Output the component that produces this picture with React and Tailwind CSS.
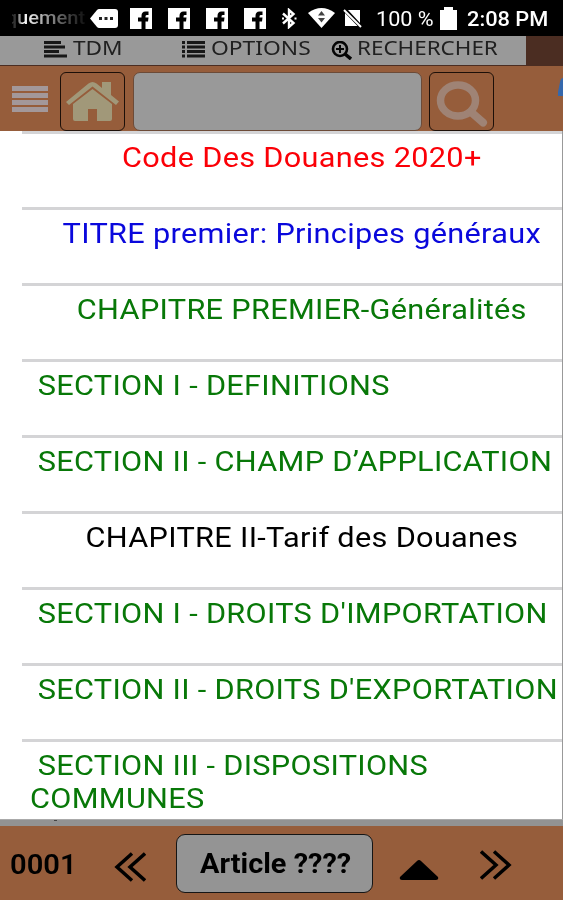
const ENTRIES = [
  { text: "Code Des Douanes 2020+", style: "text-[#fb0007] text-center" },
  { text: "TITRE premier: Principes généraux", style: "text-[#0a08dc] text-center" },
  { text: "CHAPITRE PREMIER-Généralités", style: "text-[#087808] text-center" },
  { text: "SECTION I - DEFINITIONS", style: "text-[#087808] indent-[7px]" },
  { text: "SECTION II - CHAMP D’APPLICATION", style: "text-[#087808] indent-[7px]" },
  { text: "CHAPITRE II-Tarif des Douanes", style: "text-black text-center" },
  { text: "SECTION I - DROITS D'IMPORTATION", style: "text-[#087808] indent-[7px]" },
  { text: "SECTION II - DROITS D'EXPORTATION", style: "text-[#087808] indent-[7px]" },
  { text: "SECTION III - DISPOSITIONS\nCOMMUNES", style: "text-[#087808] indent-[7px]" },
];

function FacebookIcon() {
  return (
    <svg viewBox="0 0 22 21" className="h-[21px] w-[22px] shrink-0">
      <path d="M0 0h22v21H0z" fill="#fff" />
      <path d="M11.500 21v-7.500H8V9.500H11.500V8Q11.500 3.500 15.500 3.500H18.500V7H17Q15.500 7 15.500 8.400V9.500H18.500L18 13.500H15.500V21z" fill="#000" />
    </svg>
  );
}

function StatusBar() {
  return (
    <div className="flex h-[36px] items-center bg-black text-white">
      <div className="ml-[12px] h-[26px] w-[73px] shrink-0 overflow-hidden">
        <span className="block w-max origin-left scale-x-[1.06] bg-gradient-to-r from-[#333] from-5% via-white via-15% to-[#111] bg-clip-text text-[19px] leading-[26px] font-medium text-transparent">
          <span className="-ml-[6px]">q</span>uement
        </span>
      </div>
      <svg viewBox="0 0 28 19" className="ml-[5px] h-[19px] w-[28px] shrink-0">
        <path d="M0 9.500 7 1Q8 0 9 0H25Q28 0 28 3V16Q28 19 25 19H9Q8 19 7 18Z" fill="#fff" />
        <path d="M9 8h3v3H9zM14.500 8h3v3h-3zM20 8h3v3h-3z" fill="#222" />
      </svg>
      <div className="ml-[12px] flex gap-[16px]">
        <FacebookIcon />
        <FacebookIcon />
        <FacebookIcon />
        <FacebookIcon />
      </div>
      <svg viewBox="0 0 16 21" className="ml-[15px] h-[21px] w-[16px] shrink-0" fill="none" stroke="#fff" strokeWidth="2.400">
        <path d="M2 5.500 12.500 15 8 19V2L12.500 6 2 15.500" />
        <path d="M1 9.500h2v2H1zM13.500 9.500h2v2h-2z" fill="#fff" stroke="none" />
      </svg>
      <svg viewBox="0 0 27 20" className="ml-[11px] h-[20px] w-[27px] shrink-0">
        <path d="M0 5Q13.500-5 27 5L13.500 20z" fill="#fff" />
        <path d="M13.500 3 17 7.500H10zM13.500 14.500 17 10H10z" fill="#444" />
      </svg>
      <svg viewBox="0 0 19 19" className="ml-[8px] h-[19px] w-[19px] shrink-0">
        <path d="M5 1H17V14zM2 4 14.500 17H2z" fill="#fff" />
        <path d="M1 1 18 18" stroke="#fff" strokeWidth="2" />
      </svg>
      <span className="mt-[2px] ml-[14px] w-[64px] origin-left scale-x-[1.08] text-[20px] whitespace-nowrap">100 %</span>
      <svg viewBox="0 0 17 23" className="h-[23px] w-[17px] shrink-0">
        <path d="M0 3H4V0H13V3H17V23H0z" fill="#fff" />
      </svg>
      <span className="mt-[2px] ml-[10px] origin-left scale-x-[1.09] text-[20px] font-medium whitespace-nowrap">2:08 PM</span>
    </div>
  );
}

function TabBar() {
  return (
    <div className="flex h-[30px] bg-[#4b2d22]">
      <div className="flex h-[29px] w-[526px] bg-[#999] font-['Noto_Sans'] text-[19px] leading-[24px] text-[#202020]">
        <svg viewBox="0 0 23 17" className="mt-[5px] ml-[44px] h-[17px] w-[23px] shrink-0" stroke="#181818" strokeWidth="2.800">
          <path d="M0 1.500h17M0 6h21M0 10.500h15M0 15h23" />
        </svg>
        <span className="ml-[6px] w-[109px] origin-left scale-x-[1.19]">TDM</span>
        <svg viewBox="0 0 23 17" className="mt-[5px] h-[17px] w-[23px] shrink-0" stroke="#181818" strokeWidth="2.800">
          <path d="M0 1.500h3M5 1.500h18M0 6h3M5 6h18M0 10.500h3M5 10.500h18M0 15h3M5 15h18" />
        </svg>
        <span className="ml-[6px] w-[120px] origin-left scale-x-[1.2]">OPTIONS</span>
        <svg viewBox="0 0 21 19" className="mt-[5px] h-[19px] w-[21px] shrink-0" fill="none" stroke="#050505">
          <circle cx="9" cy="8" r="7" strokeWidth="2.600" />
          <path d="M14 13 20 18" strokeWidth="3.500" />
          <path d="M5 8h8M9 4v8" strokeWidth="2" />
        </svg>
        <span className="ml-[5px] origin-left scale-x-[1.18]">RECHERCHER</span>
      </div>
    </div>
  );
}

function SearchBar() {
  return (
    <div className="flex h-[65px] items-start overflow-hidden bg-[#965d3b] pt-[6px]">
      <svg viewBox="0 0 36 26" className="mt-[14px] ml-[12px] h-[26px] w-[36px] shrink-0" fill="#a3989a">
        <path d="M0 0h36v5H0zM0 7h36v5H0zM0 14h36v5H0zM0 21h36v5H0z" />
      </svg>
      <button className="ml-[12px] flex h-[59px] w-[65px] shrink-0 justify-center rounded-[6px] border border-[#1c0f08] pt-[9px]">
        <svg viewBox="0 0 53 39" className="h-[39px] w-[53px]" fill="#a19879">
          <path d="M0 20 22.500 1.500Q26.500-1.500 30.500 1.500L36 6V0H45V13L53 19.500 50 23 26.500 4.500 3 23z" />
          <path d="M7 22 26.500 7 46 22V37Q46 39 44 39H31V27H22V39H9Q7 39 7 37z" />
        </svg>
      </button>
      <div className="ml-[8px] h-[59px] w-[289px] shrink-0 rounded-[7px] border border-[#6c4b38] bg-[#999]" />
      <button className="ml-[7px] flex h-[59px] w-[65px] shrink-0 rounded-[6px] border border-[#1c0f08] pt-[8px] pl-[6px]">
        <svg viewBox="0 0 52 46" className="h-[46px] w-[52px]" fill="none" stroke="#9f8375">
          <ellipse cx="22" cy="19.500" rx="17.500" ry="15.500" strokeWidth="7.500" />
          <path d="M35 31 47 41.500" strokeWidth="8" strokeLinecap="round" />
        </svg>
      </button>
      <svg viewBox="0 0 5 18" className="mt-[6px] ml-auto h-[18px] w-[5px] shrink-0">
        <path d="M5 0Q3 0 2 4L0 14V18H5z" fill="#3568ad" />
      </svg>
    </div>
  );
}

function Entry({ text, style }) {
  return (
    <li className="ml-[22px] h-[76px] border-t-[3px] border-[#d4d4d6] pt-[7px] pl-[8px] last:h-[80px]">
      <span
        className={`block w-[496px] origin-left scale-x-[1.096] text-[28px] leading-[33px] tracking-[0.28px] whitespace-pre ${style}`}
      >
        {text}
      </span>
    </li>
  );
}

function BottomBar() {
  return (
    <div className="flex h-[74px] items-start bg-[#965d3b] text-black">
      <span className="mt-[22px] ml-[10px] w-[104px] origin-left scale-x-[1.04] text-[28px] leading-[34px] font-semibold">0001</span>
      <svg viewBox="0 0 32 30" className="mt-[26px] h-[30px] w-[32px] shrink-0" fill="none" stroke="#000" strokeWidth="3.500">
        <path d="M18 1.500 3 15 18 28.500M31 1.500 16 15 31 28.500" />
      </svg>
      <button className="mt-[8px] ml-[30px] flex h-[59px] w-[197px] shrink-0 items-center justify-center rounded-[9px] border border-[#151515] bg-[#949494]">
        <span className="mt-[2px] ml-[2px] scale-x-[1.07] text-[27px] font-bold whitespace-nowrap">Article ????</span>
      </button>
      <svg viewBox="0 0 40 20" className="mt-[34px] ml-[26px] h-[20px] w-[40px] shrink-0">
        <path d="M18 1Q20-1 22 1L39 17Q40 20 37 20H3Q0 20 1 17z" />
      </svg>
      <svg viewBox="0 0 32 30" className="mt-[24px] ml-[41px] h-[30px] w-[32px] shrink-0" fill="none" stroke="#000" strokeWidth="3.500">
        <path d="M1 1.500 16 15 1 28.500M14 1.500 29 15 14 28.500" />
      </svg>
    </div>
  );
}

export default function App() {
  return (
    <div className="flex h-[900px] w-[563px] flex-col overflow-hidden bg-[#999] font-[Roboto,sans-serif]">
      <StatusBar />
      <TabBar />
      <SearchBar />
      <ul className="h-[688px] w-[562px] overflow-hidden bg-white">
        {ENTRIES.map((entry) => (
          <Entry key={entry.text} {...entry} />
        ))}
      </ul>
      <div className="h-[7px] border-t border-[#aaa] bg-[#929292]">
        <div className="ml-[54px] h-px w-[3px] bg-[#444]" />
      </div>
      <BottomBar />
    </div>
  );
}
